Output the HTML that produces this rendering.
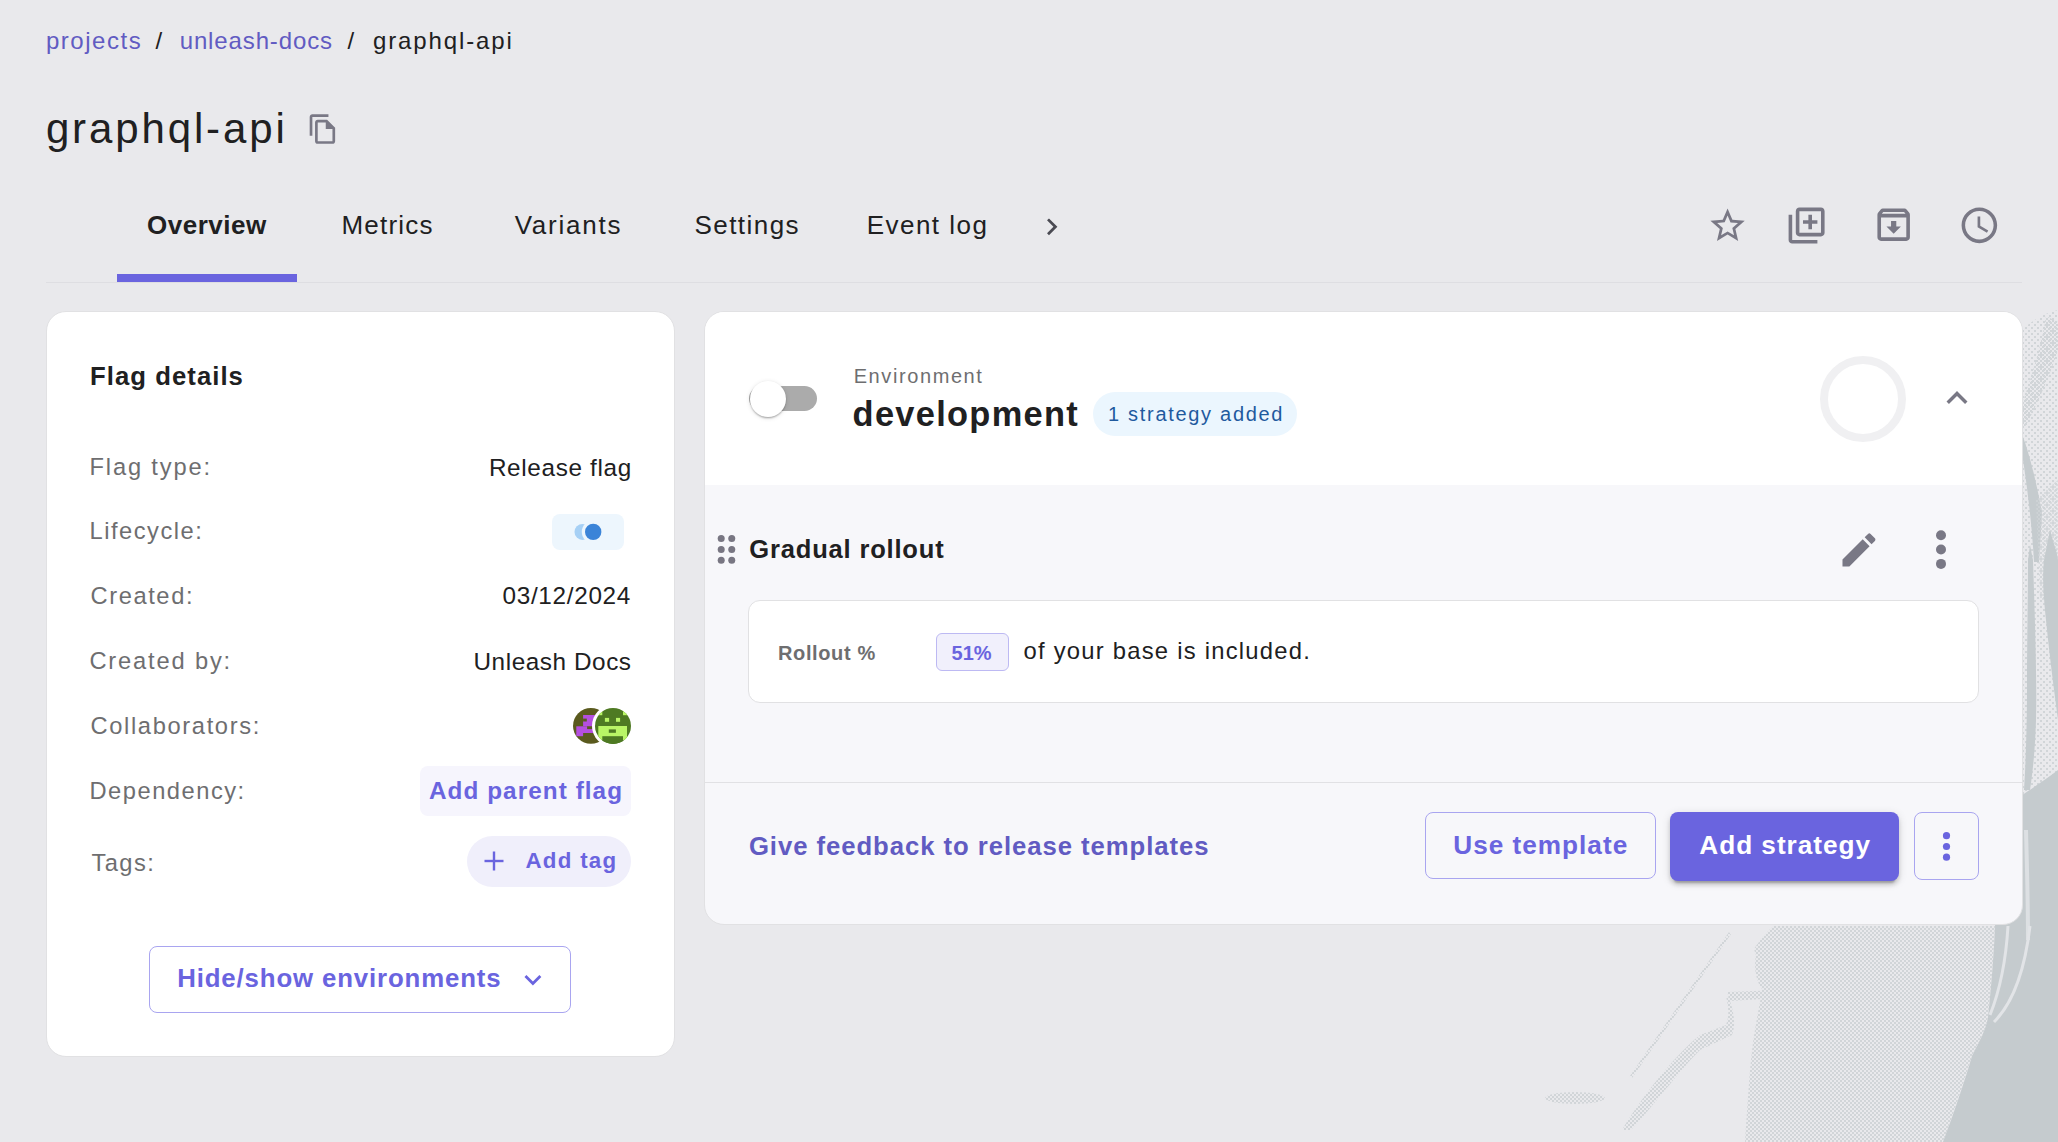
<!DOCTYPE html>
<html><head><meta charset="utf-8"><title>graphql-api</title>
<style>
html,body{margin:0;padding:0;}
body{width:2058px;height:1142px;overflow:hidden;position:relative;background:#E9E9EC;font-family:"Liberation Sans", sans-serif;}
.t{position:absolute;white-space:nowrap;}
.r{position:absolute;box-sizing:border-box;}
</style></head><body>
<svg class="r" style="left:0;top:0;width:2058px;height:1142px" viewBox="0 0 2058 1142">
<defs>
<pattern id="s1" width="4" height="4" patternUnits="userSpaceOnUse"><rect x="0" y="0" width="2" height="2" fill="#D1D5D8"/><rect x="2" y="2" width="2" height="2" fill="#D1D5D8"/></pattern>
<pattern id="s2" width="6" height="6" patternUnits="userSpaceOnUse"><rect x="0" y="0" width="2" height="2" fill="#D1D5D8"/><rect x="3" y="3" width="2" height="2" fill="#D1D5D8"/></pattern>
</defs>
<path d="M2022 330 C2035 318 2048 312 2058 310 L2058 870 L2022 870 Z" fill="url(#s2)"/>
<path d="M2046 316 L2058 322 L2058 350 C2048 380 2035 410 2022 432 L2022 405 C2030 380 2042 345 2046 316 Z" fill="url(#s1)"/>
<path d="M2023 437 C2030 455 2038 490 2042 513 L2039 562 L2034 562 C2032 525 2027 485 2023 460 Z" fill="#C5CBCE"/>
<path d="M2036 500 C2045 490 2058 480 2058 480 L2058 600 L2040 600 Z" fill="url(#s1)" opacity="0.7"/>
<path d="M2030 545 L2033 560 C2035 620 2037 680 2036 720 C2035 750 2033 770 2030 790 L2024 790 C2026 760 2027 720 2027 690 C2027 640 2028 600 2028 560 Z" fill="#C5CBCE"/>
<path d="M2050 530 C2054 545 2058 555 2058 560 L2058 720 C2054 690 2050 660 2046 620 C2044 600 2042 580 2044 560 C2046 550 2048 540 2050 530 Z" fill="#C5CBCE"/>
<path d="M2022 795 C2030 790 2045 780 2058 770 L2058 1142 L1943 1142 C1955 1110 1965 1080 1972 1056 C1980 1040 1986 1030 1988 1017 C1992 980 1994 950 1995 926 L1998 890 L2022 860 Z" fill="#C5CBCE"/>
<path d="M2026 830 C2027 870 2028 900 2028 940" stroke="#DDE0E3" stroke-width="4" fill="none"/>
<path d="M2008 926 C2006 960 2000 990 1990 1015" stroke="#E2E4E7" stroke-width="3" fill="none"/>
<path d="M2030 926 C2026 960 2016 1000 1994 1022" stroke="#E2E4E7" stroke-width="3" fill="none"/>
<path d="M1774 926 L1995 926 C1994 950 1992 980 1988 1017 C1986 1030 1980 1040 1972 1056 C1965 1080 1955 1110 1943 1142 L1745 1142 C1748 1100 1750 1060 1754 1036 C1758 1010 1762 995 1762 988 C1760 970 1756 955 1754 949 C1760 940 1768 930 1774 926 Z" fill="url(#s1)"/>
<ellipse cx="1780" cy="965" rx="25" ry="35" fill="url(#s1)"/>
<ellipse cx="1975" cy="975" rx="8" ry="30" fill="url(#s1)"/>
<path d="M1727 992 L1781 990 L1781 998 L1730 1001 Z" fill="url(#s1)"/>
<path d="M1728 996 C1734 1010 1736 1025 1732 1035 L1700 1050 C1680 1070 1650 1110 1631 1130 L1622 1130 C1640 1100 1670 1060 1700 1035 L1726 1025 C1730 1015 1728 1005 1726 996 Z" fill="url(#s1)"/>
<path d="M1730 933 L1631 1077" stroke="url(#s1)" stroke-width="3" fill="none"/>
<ellipse cx="1575" cy="1098" rx="30" ry="6" fill="url(#s1)"/>
</svg>
<div class="t" style="left:45.9px;top:29.28px;font-size:24px;line-height:24px;font-weight:400;color:#615BC2;letter-spacing:1.54px;">projects</div>
<div class="t" style="left:155.5px;top:29.28px;font-size:24px;line-height:24px;font-weight:400;color:#202021;letter-spacing:0.00px;">/</div>
<div class="t" style="left:179.7px;top:29.28px;font-size:24px;line-height:24px;font-weight:400;color:#615BC2;letter-spacing:0.87px;">unleash-docs</div>
<div class="t" style="left:347.5px;top:29.28px;font-size:24px;line-height:24px;font-weight:400;color:#202021;letter-spacing:0.00px;">/</div>
<div class="t" style="left:372.9px;top:29.28px;font-size:24px;line-height:24px;font-weight:400;color:#202021;letter-spacing:1.89px;">graphql-api</div>
<div class="t" style="left:45.9px;top:108.45px;font-size:42px;line-height:42px;font-weight:400;color:#202021;letter-spacing:2.87px;">graphql-api</div>
<svg class="r" style="left:306.92px;top:112.96px;width:32.16px;height:32.16px;" viewBox="0 0 24 24"><path fill="#797885" d="M16 1H4c-1.1 0-2 .9-2 2v14h2V3h12V1zm-1 4H8c-1.1 0-1.99.9-1.99 2L6 21c0 1.1.89 2 1.99 2H19c1.1 0 2-.9 2-2V11l-6-6zM8 21V7h6v5h5v9H8z"/></svg>
<div class="t" style="left:147.1px;top:211.79px;font-size:26px;line-height:26px;font-weight:700;color:#202021;letter-spacing:0.50px;">Overview</div>
<div class="t" style="left:341.5px;top:211.79px;font-size:26px;line-height:26px;font-weight:400;color:#202021;letter-spacing:1.20px;">Metrics</div>
<div class="t" style="left:514.7px;top:211.79px;font-size:26px;line-height:26px;font-weight:400;color:#202021;letter-spacing:1.77px;">Variants</div>
<div class="t" style="left:694.5px;top:211.79px;font-size:26px;line-height:26px;font-weight:400;color:#202021;letter-spacing:1.44px;">Settings</div>
<div class="t" style="left:866.7px;top:211.79px;font-size:26px;line-height:26px;font-weight:400;color:#202021;letter-spacing:1.48px;">Event log</div>
<svg class="r" style="left:1035.37px;top:209.60px;width:33.60px;height:33.60px;" viewBox="0 0 24 24"><path fill="#4a4a52" d="M8.59 16.59 13.17 12 8.59 7.41 10 6l6 6-6 6-1.41-1.41z"/></svg>
<div class="r" style="left:46px;top:282px;width:1976px;height:1px;background:#DEDEE2;"></div>
<div class="r" style="left:117px;top:274px;width:180px;height:8px;background:#6A64DF;"></div>
<svg class="r" style="left:1707.07px;top:204.57px;width:41.16px;height:41.16px;" viewBox="0 0 24 24"><path fill="#797885" d="M22 9.24l-7.19-.62L12 2 9.19 8.63 2 9.24l5.46 4.73L5.82 21 12 17.27 18.18 21l-1.63-7.03L22 9.24zM12 15.4l-3.76 2.27 1-4.28-3.32-2.88 4.38-.38L12 6.1l1.71 4.04 4.38.38-3.32 2.88 1 4.28L12 15.4z"/></svg>
<svg class="r" style="left:1784.80px;top:203.70px;width:43.20px;height:43.20px;" viewBox="0 0 24 24"><path fill="#797885" d="M4 6H2v14c0 1.1.9 2 2 2h14v-2H4V6zm16-4H8c-1.1 0-2 .9-2 2v12c0 1.1.9 2 2 2h12c1.1 0 2-.9 2-2V4c0-1.1-.9-2-2-2zm0 14H8V4h12v12zm-7-2h2v-3h3V9h-3V6h-2v3h-3v2h3z"/></svg>
<svg class="r" style="left:1871.78px;top:203.48px;width:43.34px;height:43.34px;" viewBox="0 0 24 24"><path fill="#797885" d="M20.54 5.23l-1.39-1.68C18.88 3.21 18.47 3 18 3H6c-.47 0-.88.21-1.16.55L3.46 5.23C3.17 5.57 3 6.02 3 6.5V19c0 1.1.9 2 2 2h14c1.1 0 2-.9 2-2V6.5c0-.48-.17-.93-.46-1.27zM6.24 5h11.52l.81.97H5.44l.8-.97zM5 19V8h14v11H5zm8.45-9h-2.9v3H8l4 4 4-4h-2.55z"/></svg>
<svg class="r" style="left:1958.14px;top:203.74px;width:42.72px;height:42.72px;" viewBox="0 0 24 24"><path fill="#797885" d="M11.99 2C6.47 2 2 6.48 2 12s4.47 10 9.99 10C17.52 22 22 17.52 22 12S17.52 2 11.99 2zM12 20c-4.42 0-8-3.58-8-8s3.58-8 8-8 8 3.58 8 8-3.58 8-8 8zm.5-13H11v6l5.25 3.15.75-1.23-4.5-2.67z"/></svg>
<div class="r" style="left:46px;top:311px;width:629px;height:746px;background:#fff;border:1px solid #E1E1E3;border-radius:20px;"></div>
<div class="t" style="left:90.1px;top:364.24px;font-size:25.7px;line-height:25.7px;font-weight:700;color:#202021;letter-spacing:1.04px;">Flag details</div>
<div class="t" style="left:89.5px;top:456.14px;font-size:23.7px;line-height:23.7px;font-weight:400;color:#6E6E70;letter-spacing:1.84px;">Flag type:</div>
<div class="t" style="left:89.5px;top:519.94px;font-size:23.7px;line-height:23.7px;font-weight:400;color:#6E6E70;letter-spacing:1.51px;">Lifecycle:</div>
<div class="t" style="left:90.5px;top:585.14px;font-size:23.7px;line-height:23.7px;font-weight:400;color:#6E6E70;letter-spacing:1.59px;">Created:</div>
<div class="t" style="left:89.4px;top:650.24px;font-size:23.7px;line-height:23.7px;font-weight:400;color:#6E6E70;letter-spacing:1.83px;">Created by:</div>
<div class="t" style="left:90.5px;top:715.14px;font-size:23.7px;line-height:23.7px;font-weight:400;color:#6E6E70;letter-spacing:1.64px;">Collaborators:</div>
<div class="t" style="left:89.5px;top:780.34px;font-size:23.7px;line-height:23.7px;font-weight:400;color:#6E6E70;letter-spacing:1.51px;">Dependency:</div>
<div class="t" style="left:91.5px;top:851.94px;font-size:23.7px;line-height:23.7px;font-weight:400;color:#6E6E70;letter-spacing:1.40px;">Tags:</div>
<div class="t" style="left:488.9px;top:455.63px;font-size:24.3px;line-height:24.3px;font-weight:400;color:#202021;letter-spacing:0.66px;">Release flag</div>
<div class="t" style="left:502.5px;top:584.13px;font-size:24.3px;line-height:24.3px;font-weight:400;color:#202021;letter-spacing:0.69px;">03/12/2024</div>
<div class="t" style="left:473.5px;top:649.63px;font-size:24.3px;line-height:24.3px;font-weight:400;color:#202021;letter-spacing:0.57px;">Unleash Docs</div>
<div class="r" style="left:552px;top:514px;width:72px;height:36px;background:#EDF6FD;border-radius:8px;"></div>
<svg class="r" style="left:552px;top:514px;width:72px;height:36px" viewBox="552 514 72 36">
<circle cx="582.5" cy="531.9" r="8" fill="#A6D0F5"/>
<circle cx="593.2" cy="531.9" r="11.4" fill="#EDF6FD"/>
<circle cx="593.2" cy="531.9" r="8.2" fill="#3B84D8"/>
</svg>
<svg class="r" style="left:560px;top:700px;width:80px;height:60px" viewBox="560 700 80 60">
<defs><clipPath id="a1"><circle cx="590.9" cy="725.9" r="17.9"/></clipPath><clipPath id="a2"><circle cx="613" cy="725.9" r="18"/></clipPath></defs>
<g clip-path="url(#a1)">
<rect x="570" y="705" width="45" height="45" fill="#5A5A1E"/>
<rect x="583.1" y="715" width="12" height="11.3" fill="#B54FE0"/>
<rect x="583.1" y="718.6" width="3.7" height="2.9" fill="#5A5A1E"/>
<rect x="576.3" y="726.3" width="19" height="6.7" fill="#B54FE0"/>
<rect x="587.1" y="726.3" width="5" height="2.8" fill="#5A5A1E"/>
<rect x="576.3" y="733" width="6.8" height="3.2" fill="#B54FE0"/>
</g>
<circle cx="613" cy="725.9" r="21" fill="#fff"/>
<g clip-path="url(#a2)">
<rect x="594" y="707" width="38" height="38" fill="#4E7A23"/>
<rect x="596" y="710" width="6.3" height="5.2" fill="#B9F566"/>
<rect x="623" y="710" width="6" height="5.2" fill="#B9F566"/>
<rect x="604.9" y="717.9" width="4.2" height="3.9" fill="#B9F566"/>
<rect x="616" y="717.9" width="4.1" height="3.9" fill="#B9F566"/>
<rect x="598.3" y="726" width="28.7" height="14" fill="#B9F566"/>
<rect x="608.8" y="729.4" width="7.1" height="3.4" fill="#4E7A23"/>
<rect x="602.3" y="736.2" width="20.7" height="8" fill="#4E7A23"/>
</g>
</svg>
<div class="r" style="left:420px;top:766px;width:211px;height:50px;background:#F6F5FD;border-radius:8px;"></div>
<div class="t" style="left:429.0px;top:779.13px;font-size:24.3px;line-height:24.3px;font-weight:700;color:#6A64DF;letter-spacing:1.06px;">Add parent flag</div>
<div class="r" style="left:467px;top:836px;width:164px;height:51px;background:#F0EFFB;border-radius:26px;"></div>
<svg class="r" style="left:484px;top:851px;width:20px;height:20px" viewBox="0 0 20 20"><rect x="8.8" y="0.5" width="2.4" height="19" fill="#6A64DF"/><rect x="0.5" y="8.8" width="19" height="2.4" fill="#6A64DF"/></svg>
<div class="t" style="left:525.4px;top:849.82px;font-size:22.3px;line-height:22.3px;font-weight:700;color:#6A64DF;letter-spacing:1.30px;">Add tag</div>
<div class="r" style="left:149px;top:946px;width:422px;height:67px;border:1.5px solid #A9A5F0;border-radius:8px;background:#fff;"></div>
<div class="t" style="left:177.2px;top:966.36px;font-size:25.8px;line-height:25.8px;font-weight:700;color:#6A64DF;letter-spacing:0.86px;">Hide/show environments</div>
<svg class="r" style="left:516.14px;top:963.09px;width:33.84px;height:33.84px;" viewBox="0 0 24 24"><path fill="#6A64DF" d="M16.59 8.59 12 13.17 7.41 8.59 6 10l6 6 6-6z"/></svg>
<div class="r" style="left:704px;top:311px;width:1319px;height:614px;background:#F7F7FA;border:1px solid #E1E1E3;border-radius:20px;overflow:hidden;"></div>
<div class="r" style="left:705px;top:312px;width:1317px;height:173px;background:#fff;border-radius:19px 19px 0 0;"></div>
<div class="r" style="left:749px;top:385.7px;width:68px;height:25.3px;background:#ABABAB;border-radius:13px;"></div>
<div class="r" style="left:750px;top:380.9px;width:36.2px;height:36.2px;background:#fff;border-radius:50%;box-shadow:0 2px 2px -1px rgba(0,0,0,.2),0 1px 2px 0 rgba(0,0,0,.14),0 1px 5px 0 rgba(0,0,0,.12);"></div>
<div class="t" style="left:853.7px;top:365.87px;font-size:20px;line-height:20px;font-weight:400;color:#6E6E70;letter-spacing:1.59px;">Environment</div>
<div class="t" style="left:852.6px;top:397.28px;font-size:34.4px;line-height:34.4px;font-weight:700;color:#202021;letter-spacing:1.30px;">development</div>
<div class="r" style="left:1093px;top:392px;width:204px;height:44px;background:#EBF6FE;border-radius:22px;"></div>
<div class="t" style="left:1108.0px;top:404.17px;font-size:20px;line-height:20px;font-weight:400;color:#1F5A9E;letter-spacing:1.70px;">1 strategy added</div>
<div class="r" style="left:1820px;top:356px;width:86px;height:86px;border:8.5px solid #F0F0F2;border-radius:50%;"></div>
<svg class="r" style="left:1935.50px;top:377.00px;width:42.00px;height:42.00px;" viewBox="0 0 24 24"><path fill="#797885" d="M12 8l-6 6 1.41 1.41L12 10.83l4.59 4.58L18 14z"/></svg>
<svg class="r" style="left:710px;top:525px;width:30px;height:45px" viewBox="710 525 30 45"><circle cx="721.2" cy="538.6" r="3.5" fill="#787682"/><circle cx="721.2" cy="549.4" r="3.5" fill="#787682"/><circle cx="721.2" cy="560.2" r="3.5" fill="#787682"/><circle cx="731.75" cy="538.6" r="3.5" fill="#787682"/><circle cx="731.75" cy="549.4" r="3.5" fill="#787682"/><circle cx="731.75" cy="560.2" r="3.5" fill="#787682"/></svg>
<div class="t" style="left:749.3px;top:536.81px;font-size:25.5px;line-height:25.5px;font-weight:700;color:#202021;letter-spacing:0.83px;">Gradual rollout</div>
<svg class="r" style="left:1837.41px;top:527.51px;width:43.92px;height:43.92px;" viewBox="0 0 24 24"><path fill="#797885" d="M3 17.25V21h3.75L17.81 9.94l-3.75-3.75L3 17.25zM20.71 7.04c.39-.39.39-1.02 0-1.41l-2.34-2.34a.9959.9959 0 0 0-1.41 0l-1.83 1.83 3.75 3.75 1.83-1.83z"/></svg>
<svg class="r" style="left:1930px;top:525px;width:22px;height:50px" viewBox="1930 525 22 50"><circle cx="1941" cy="535.3" r="5" fill="#797885"/><circle cx="1941" cy="549.5" r="5" fill="#797885"/><circle cx="1941" cy="563.9" r="5" fill="#797885"/></svg>
<div class="r" style="left:748px;top:600px;width:1231px;height:103px;background:#fff;border:1.5px solid #E1E1E3;border-radius:12px;"></div>
<div class="t" style="left:778.0px;top:642.57px;font-size:20px;line-height:20px;font-weight:700;color:#6E6E70;letter-spacing:0.62px;">Rollout %</div>
<div class="r" style="left:936px;top:632.5px;width:73px;height:38.5px;background:#F1F0FC;border:1.5px solid #BDB9F3;border-radius:6px;"></div>
<div class="t" style="left:951.6px;top:642.57px;font-size:20px;line-height:20px;font-weight:700;color:#6A64DF;letter-spacing:0.00px;">51%</div>
<div class="t" style="left:1023.6px;top:639.35px;font-size:23.8px;line-height:23.8px;font-weight:400;color:#202021;letter-spacing:1.23px;">of your base is included.</div>
<div class="r" style="left:705px;top:782px;width:1317px;height:1px;background:#E1E1E4;"></div>
<div class="t" style="left:748.9px;top:834.04px;font-size:25.7px;line-height:25.7px;font-weight:700;color:#615BC2;letter-spacing:0.95px;">Give feedback to release templates</div>
<div class="r" style="left:1425px;top:812px;width:231px;height:67px;border:1.5px solid #A9A5F0;border-radius:8px;"></div>
<div class="t" style="left:1453.3px;top:832.02px;font-size:26.2px;line-height:26.2px;font-weight:700;color:#6A64DF;letter-spacing:0.99px;">Use template</div>
<div class="r" style="left:1670px;top:812px;width:229px;height:69px;background:#6A64DF;border-radius:8px;box-shadow:0 6px 2px -4px rgba(0,0,0,.2),0 4px 4px 0 rgba(0,0,0,.14),0 2px 10px 0 rgba(0,0,0,.12);"></div>
<div class="t" style="left:1699.3px;top:831.82px;font-size:26.2px;line-height:26.2px;font-weight:700;color:#fff;letter-spacing:0.97px;">Add strategy</div>
<div class="r" style="left:1914px;top:812px;width:65px;height:68px;border:1.5px solid #A9A5F0;border-radius:8px;"></div>
<svg class="r" style="left:1930px;top:825px;width:30px;height:45px" viewBox="1930 825 30 45"><circle cx="1946.5" cy="835.7" r="3.6" fill="#6A64DF"/><circle cx="1946.5" cy="846.5" r="3.6" fill="#6A64DF"/><circle cx="1946.5" cy="857.2" r="3.6" fill="#6A64DF"/></svg>
</body></html>
